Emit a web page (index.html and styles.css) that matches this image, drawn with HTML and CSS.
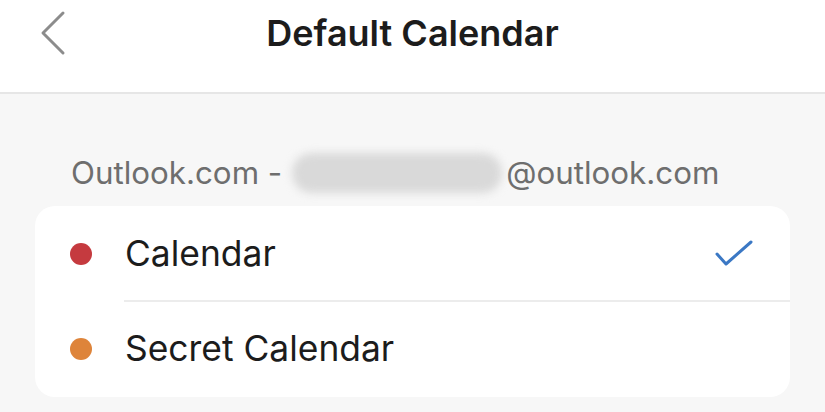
FILE: index.html
```html
<!DOCTYPE html>
<html>
<head>
<meta charset="utf-8">
<link rel="stylesheet" href="styles.css">
</head>
<body>
<div class="screen">
  <header class="topbar">
    <button class="back" aria-label="Back">
      <svg width="30" height="46" viewBox="0 0 30 46"><path d="M23 3 L3 23 L23 43" fill="none" stroke="#8c8c8c" stroke-width="3" stroke-linecap="round" stroke-linejoin="round"/></svg>
    </button>
    <h1 class="title">Default Calendar</h1>
  </header>
  <main class="content">
    <div class="section-label"><span>Outlook.com -</span><span class="blur"></span><span>@outlook.com</span></div>
    <ul class="card">
      <li class="row">
        <span class="dot dot-red"></span>
        <span class="name">Calendar</span>
        <svg class="check" width="38" height="28" viewBox="0 0 38 28"><path d="M2 14 L11 24 L36 2" fill="none" stroke="#3b78c4" stroke-width="3" stroke-linecap="round" stroke-linejoin="round"/></svg>
      </li>
      <li class="row">
        <span class="dot dot-orange"></span>
        <span class="name">Secret Calendar</span>
      </li>
    </ul>
  </main>
</div>
</body>
</html>
```

FILE: styles.css
```css
* { box-sizing: border-box; }
html, body { margin: 0; padding: 0; }
body {
  width: 825px;
  height: 412px;
  overflow: hidden;
  background: #f7f7f7;
  font-family: Inter, "Liberation Sans", sans-serif;
}
.screen { display: flex; flex-direction: column; }
.topbar {
  height: 94px;
  background: #ffffff;
  border-bottom: 2px solid #e6e6e6;
  display: grid;
  grid-template-columns: 1fr auto 1fr;
  align-items: start;
}
.back {
  grid-column: 1;
  grid-row: 1;
  justify-self: start;
  margin: 10px 0 0 40px;
  padding: 0;
  border: 0;
  background: none;
  display: flex;
}
.title {
  grid-column: 2;
  grid-row: 1;
  margin: 11px 0 0 0;
  font-size: 36px;
  line-height: 44px;
  font-weight: 600;
  color: #1c1c1c;
}
.content { padding: 0 35px; }
.section-label {
  display: flex;
  align-items: center;
  height: 112px;
  padding: 46px 0 0 36px;
  font-size: 31.3px;
  color: #6e6e6e;
  gap: 10px;
}
.blur {
  width: 210px;
  height: 40px;
  border-radius: 20px;
  background: #d9d9d9;
  filter: blur(4px);
  margin-right: -6px;
}
.card {
  list-style: none;
  margin: 0;
  padding: 0;
  background: #ffffff;
  border-radius: 20px;
  height: 191px;
}
.row {
  height: 95px;
  display: flex;
  align-items: center;
  padding-left: 35px;
}
.row:first-child { position: relative; }
.row:first-child::after {
  content: "";
  position: absolute;
  left: 89px;
  right: 0;
  bottom: -1px;
  height: 2px;
  background: #ececec;
}
.dot {
  width: 22px;
  height: 22px;
  border-radius: 50%;
  flex: none;
}
.dot-red { background: #c53a3f; }
.dot-orange { background: #de843a; }
.name {
  margin-left: 33px;
  font-size: 35.4px;
  color: #1c1c1c;
}
.check { margin-left: auto; margin-right: 37px; }
```
